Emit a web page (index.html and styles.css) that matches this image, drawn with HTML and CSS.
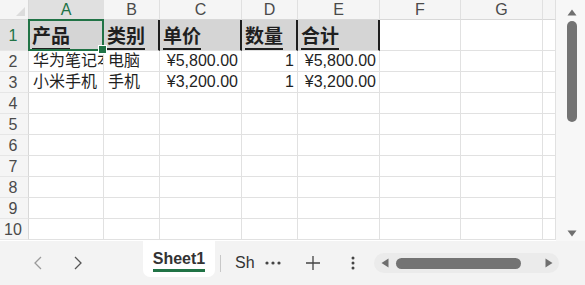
FILE: index.html
```html
<!DOCTYPE html>
<html lang="zh-CN">
<head>
    <meta charset="UTF-8">
    <title>Sheet1</title>
    <link rel="stylesheet" href="styles.css">
</head>
<body>
    <div class="sheet">
        <div class="grid">
            <div class="corner"><span class="corner-tri"></span></div>
            <div class="colhead sel">A</div>
            <div class="colhead">B</div>
            <div class="colhead">C</div>
            <div class="colhead">D</div>
            <div class="colhead">E</div>
            <div class="colhead">F</div>
            <div class="colhead">G</div>
            <div class="colhead"></div>

            <div class="rowhead sel">1</div>
            <div class="cell title active"><span>产品</span></div>
            <div class="cell title thick"><span>类别</span></div>
            <div class="cell title thick"><span>单价</span></div>
            <div class="cell title thick"><span>数量</span></div>
            <div class="cell title thick"><span>合计</span></div>
            <div class="cell"></div>
            <div class="cell"></div>
            <div class="cell"></div>

            <div class="rowhead">2</div>
            <div class="cell">华为笔记本电脑</div>
            <div class="cell">电脑</div>
            <div class="cell num">¥5,800.00</div>
            <div class="cell num">1</div>
            <div class="cell num">¥5,800.00</div>
            <div class="cell"></div>
            <div class="cell"></div>
            <div class="cell"></div>

            <div class="rowhead">3</div>
            <div class="cell">小米手机</div>
            <div class="cell">手机</div>
            <div class="cell num">¥3,200.00</div>
            <div class="cell num">1</div>
            <div class="cell num">¥3,200.00</div>
            <div class="cell"></div>
            <div class="cell"></div>
            <div class="cell"></div>
        </div>
        <div class="vscroll">
            <svg class="arrow" width="10" height="7" viewBox="0 0 10 7"><path d="M5 0.5 L9.5 6.5 L0.5 6.5 Z" fill="#6f6f6f"/></svg>
            <div class="vthumb"></div>
            <svg class="arrow down" width="10" height="7" viewBox="0 0 10 7"><path d="M0.5 0.5 L9.5 0.5 L5 6.5 Z" fill="#6f6f6f"/></svg>
        </div>
    </div>

    <div class="tabs">
        <div class="nav">
            <svg width="10" height="16" viewBox="0 0 10 16"><path d="M8 2 L2 8 L8 14" fill="none" stroke="#9a9a9a" stroke-width="1.3"/></svg>
            <svg width="10" height="16" viewBox="0 0 10 16"><path d="M2 2 L8 8 L2 14" fill="none" stroke="#555" stroke-width="1.3"/></svg>
        </div>
        <div class="tab"><span class="tab-label">Sheet1</span></div>
        <div class="sep"></div>
        <div class="tab-more">Sh</div>
        <svg class="dots" width="16" height="4" viewBox="0 0 16 4"><circle cx="2" cy="2" r="1.6" fill="#444"/><circle cx="8" cy="2" r="1.6" fill="#444"/><circle cx="14" cy="2" r="1.6" fill="#444"/></svg>
        <svg class="plus" width="16" height="16" viewBox="0 0 16 16"><path d="M8 1 V15 M1 8 H15" stroke="#444" stroke-width="1.3"/></svg>
        <svg class="kebab" width="4" height="16" viewBox="0 0 4 16"><circle cx="2" cy="3" r="1.5" fill="#444"/><circle cx="2" cy="8" r="1.5" fill="#444"/><circle cx="2" cy="13" r="1.5" fill="#444"/></svg>
        <div class="hscroll">
            <svg width="8" height="10" viewBox="0 0 8 10"><path d="M7.5 0.5 V9.5 L0.5 5 Z" fill="#6f6f6f"/></svg>
            <div class="hthumb"></div>
            <svg class="right" width="8" height="10" viewBox="0 0 8 10"><path d="M0.5 0.5 V9.5 L7.5 5 Z" fill="#6f6f6f"/></svg>
        </div>
    </div>

    <script>
        // empty rows 4 to 10
        const grid = document.querySelector(".grid");
        for (let r = 4; r <= 10; r++) {
            const head = document.createElement("div");
            head.className = "rowhead";
            head.textContent = r;
            grid.appendChild(head);
            for (let c = 0; c < 8; c++) {
                const cell = document.createElement("div");
                cell.className = "cell";
                grid.appendChild(cell);
            }
        }
    </script>
</body>
</html>
```

FILE: styles.css
```css
* { box-sizing: border-box; }
body { margin: 0; width: 585px; height: 285px; overflow: hidden; background: #f3f3f3; font-family: "Liberation Sans", "Noto Sans CJK SC", sans-serif; color: #1f1f1f; }

.sheet { display: flex; height: 241px; background: #fff; }
.grid { display: grid; grid-template-columns: 29px 75px 56px 82px 56px 82px 81px 82px 13px; grid-template-rows: 20px 31px repeat(9, 21px); width: 556px; }

.corner { background: #f5f5f5; border-right: 1px solid #d8d8d8; border-bottom: 1px solid #d8d8d8; position: relative; }
.corner-tri { position: absolute; right: 3px; bottom: 3px; width: 0; height: 0; border-left: 9px solid transparent; border-bottom: 9px solid #dcdcdc; }

.colhead { background: #f5f5f5; border-right: 1px solid #e0e0e0; border-bottom: 1px solid #d8d8d8; text-align: center; font-size: 16px; line-height: 19px; color: #4a4a4a; }
.rowhead { background: #f5f5f5; border-right: 1px solid #d8d8d8; border-bottom: 1px solid #e6e6e6; text-align: center; font-size: 16px; line-height: 21px; color: #4a4a4a; padding-right: 2px; }
.colhead.sel, .rowhead.sel { background: #e0e0e0; color: #217346; }
.colhead.sel { border-bottom-color: #217346; }
.rowhead.sel { line-height: 31px; }

.cell { border-right: 1px solid #e1e1e1; border-bottom: 1px solid #e1e1e1; font-size: 16px; line-height: 20px; padding: 0 3px 0 4px; white-space: nowrap; overflow: hidden; }
.cell.num { text-align: right; }
.cell.title { background: #d5d5d5; font-size: 19px; font-weight: bold; line-height: 30px; padding-left: 3px; padding-top: 2px; overflow: visible; }
.cell.title span { display: inline-block; line-height: 22px; border-bottom: 2px solid #1f1f1f; }
.cell.thick { border-right: 2px solid #1f1f1f; }

.active { position: relative; }
.active::before { content: ""; position: absolute; left: -1px; top: -1px; right: -1px; bottom: -1px; border: 2px solid #217346; z-index: 1; }
.active::after { content: ""; position: absolute; right: -4px; bottom: -4px; width: 7px; height: 7px; background: #217346; border: 1px solid #fff; z-index: 2; }

.vscroll { width: 29px; background: #f7f7f7; display: flex; flex-direction: column; align-items: center; padding: 9px 0 4px 2px; }
.vthumb { width: 10px; height: 101px; margin-top: 5px; border-radius: 5px; background: #737373; }
.arrow.down { margin-top: auto; }

.tabs { display: flex; align-items: center; height: 44px; }
.nav { width: 143px; display: flex; gap: 30px; padding-left: 33px; }
.tab { align-self: flex-start; width: 72px; height: 36px; background: #fff; border-radius: 0 0 7px 7px; display: flex; justify-content: center; padding-top: 7px; }
.tab-label { font-size: 16px; font-weight: 600; color: #333; line-height: 21px; height: 24px; border-bottom: 3px solid #217346; }
.sep { width: 1px; height: 17px; background: #c8c8c8; margin-left: 5px; }
.tab-more { font-size: 16px; color: #333; margin-left: 14px; }
.dots { margin-left: 10px; }
.plus { margin-left: 24px; }
.kebab { margin-left: 30px; }
.hscroll { margin-left: 19px; width: 185px; height: 20px; border-radius: 10px; background: #ebebeb; display: flex; align-items: center; padding: 0 6px 0 7px; }
.hthumb { width: 125px; height: 11px; margin-left: 7px; border-radius: 6px; background: #737373; }
.hscroll .right { margin-left: auto; }
```
